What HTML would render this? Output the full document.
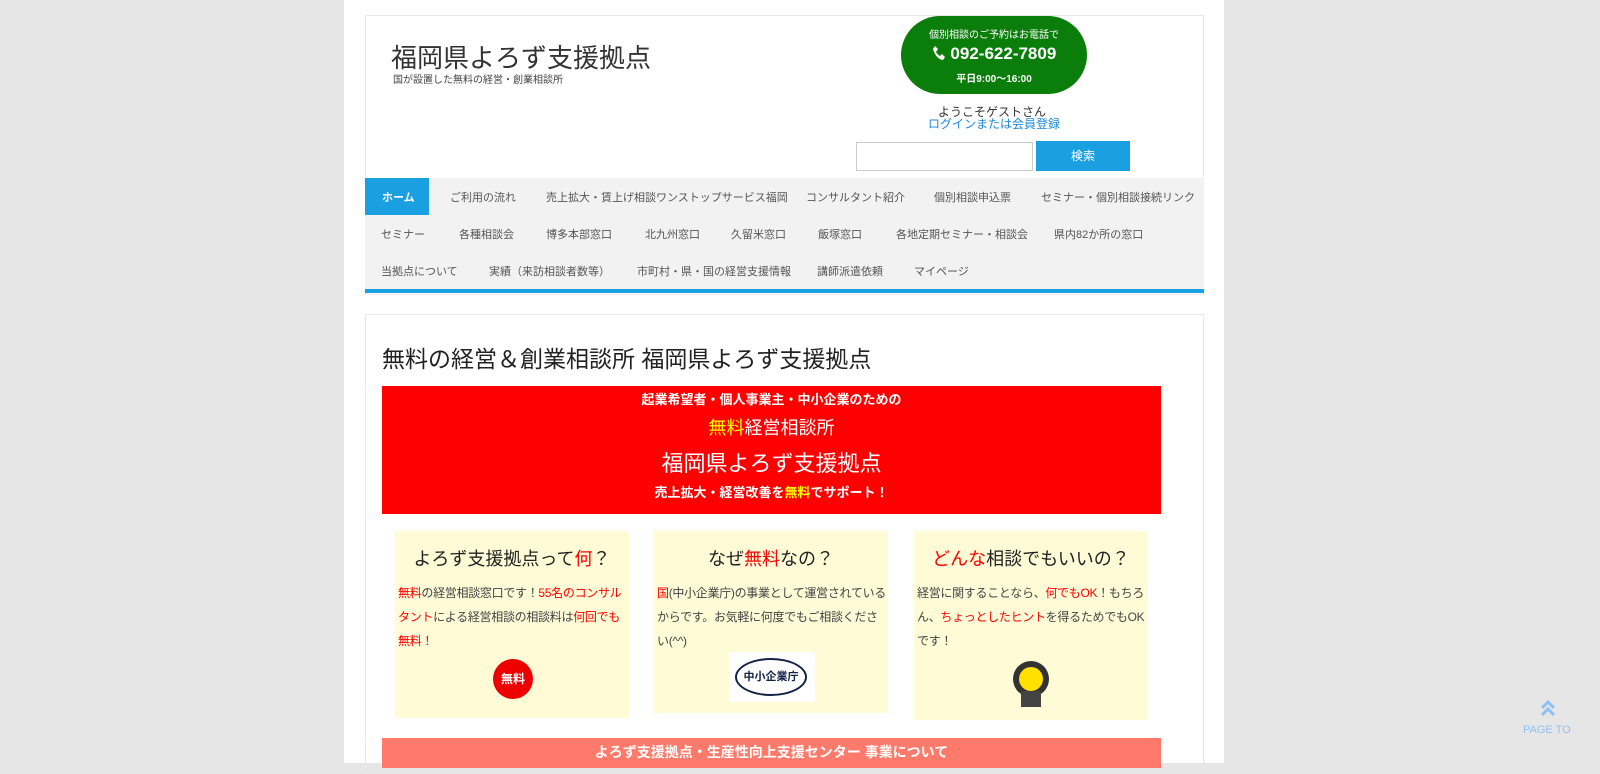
<!DOCTYPE html><html><head><meta charset="utf-8"><style>
*{margin:0;padding:0;box-sizing:border-box}
body{width:1600px;height:763px;overflow:hidden;background:#e6e6e6;font-family:"Liberation Sans","Noto Sans CJK JP",sans-serif;color:#333;position:relative}
.wrap{position:absolute;left:344px;top:0;width:880px;height:763px;background:#fff}
.hdr{position:absolute;left:21px;top:15px;width:839px;height:280px;border:1px solid #e8e8e8;background:#fff}
.abs{position:absolute}
.nav{position:absolute;left:21px;top:178px;width:839px;height:111px;background:#f2f2f2}
.nav span{position:absolute;font-size:11px;color:#555;white-space:nowrap}
.main{position:absolute;left:21px;top:314px;width:839px;height:460px;border:1px solid #e8e8e8}
.box{position:absolute;background:#fffbd6}
.box h3{font-weight:normal;font-size:18px;text-align:center;color:#222;margin-top:14px}
.box p{font-size:12px;line-height:24px;color:#444;margin:10px 2px 0 3px;letter-spacing:-0.3px}
.r{color:#f00}
</style></head><body>
<div class="wrap">
<div class="hdr"></div>
<div class="abs" style="left:47px;top:38px;font-size:26px;color:#333">福岡県よろず支援拠点</div>
<div class="abs" style="left:49px;top:71px;font-size:10px;color:#444">国が設置した無料の経営・創業相談所</div>
<div class="abs" style="left:557px;top:16px;width:186px;height:78px;border-radius:40px;background:#0a7d0a;color:#fff;text-align:center">
<div style="font-size:10px;margin-top:10px">個別相談のご予約はお電話で</div>
<div style="font-size:17px;font-weight:bold;margin-top:3px"><svg width="14" height="16" viewBox="0 0 14 16" style="vertical-align:-2px"><path d="M3 1 L6 4 L4 7 Q6 10 8 11 L10 9 L13 12 L11 15 Q4 14 1 4 Z" fill="#fff"/></svg> 092-622-7809</div>
<div style="font-size:10px;margin-top:6px;font-weight:bold">平日9:00〜16:00</div></div>
<div class="abs" style="left:594px;top:103px;font-size:12px;color:#333">ようこそゲストさん</div>
<div class="abs" style="left:584px;top:115px;font-size:12px;color:#1e88d9">ログインまたは会員登録</div>
<div class="abs" style="left:512px;top:142px;width:177px;height:29px;border:1px solid #ccc;background:#fff"></div>
<div class="abs" style="left:692px;top:141px;width:94px;height:30px;background:#1aa0e0;color:#fff;font-size:12px;text-align:center;line-height:30px">検索</div>
<div class="nav">
<div class="abs" style="left:0;top:0;width:64px;height:37px;background:#1a9fe0"></div>
<span style="left:17px;top:11px;color:#fff;font-weight:bold">ホーム</span>
<span style="left:85px;top:11px">ご利用の流れ</span>
<span style="left:181px;top:11px">売上拡大・賃上げ相談ワンストップサービス福岡</span>
<span style="left:441px;top:11px">コンサルタント紹介</span>
<span style="left:569px;top:11px">個別相談申込票</span>
<span style="left:676px;top:11px">セミナー・個別相談接続リンク</span>
<span style="left:16px;top:48px">セミナー</span>
<span style="left:94px;top:48px">各種相談会</span>
<span style="left:181px;top:48px">博多本部窓口</span>
<span style="left:280px;top:48px">北九州窓口</span>
<span style="left:366px;top:48px">久留米窓口</span>
<span style="left:453px;top:48px">飯塚窓口</span>
<span style="left:531px;top:48px">各地定期セミナー・相談会</span>
<span style="left:689px;top:48px">県内82か所の窓口</span>
<span style="left:16px;top:85px">当拠点について</span>
<span style="left:124px;top:85px">実績（来訪相談者数等）</span>
<span style="left:272px;top:85px">市町村・県・国の経営支援情報</span>
<span style="left:452px;top:85px">講師派遣依頼</span>
<span style="left:549px;top:85px">マイページ</span>
</div>
<div class="abs" style="left:21px;top:289px;width:839px;height:4px;background:#1a9fe0"></div>
<div class="main"></div>
<div class="abs" style="left:38px;top:340px;font-size:23px;color:#222">無料の経営＆創業相談所 福岡県よろず支援拠点</div>
<div class="abs" style="left:38px;top:386px;width:779px;height:128px;background:#f00;color:#fff;text-align:center;font-weight:bold">
<div style="font-size:13px;margin-top:3px">起業希望者・個人事業主・中小企業のための</div>
<div style="font-size:18px;font-weight:normal;margin-top:6px"><span style="color:#ff0">無料</span>経営相談所</div>
<div style="font-size:22px;font-weight:normal;margin-top:6px">福岡県よろず支援拠点</div>
<div style="font-size:13px;margin-top:4px">売上拡大・経営改善を<span style="color:#ff0">無料</span>でサポート！</div></div>
<div class="box" style="left:51px;top:531px;width:234px;height:187px"><h3>よろず支援拠点って<span class="r">何</span>？</h3>
<p><span class="r">無料</span>の経営相談窓口です！<span class="r">55名のコンサルタント</span>による経営相談の相談料は<span class="r">何回でも無料！</span></p>
<div class="abs" style="left:98px;top:128px;width:40px;height:40px;border-radius:50%;background:#e00;color:#fff;font-size:12px;font-weight:bold;text-align:center;line-height:40px">無料</div></div>
<div class="box" style="left:310px;top:531px;width:234px;height:182px"><h3>なぜ<span class="r">無料</span>なの？</h3>
<p><span class="r">国</span>(中小企業庁)の事業として運営されているからです。お気軽に何度でもご相談ください(^^)</p>
<div class="abs" style="left:75px;top:121px;width:86px;height:50px;background:#fff"><div style="margin:6px 6px;width:72px;height:38px;border:2px solid #124;border-radius:50%;font-size:11px;font-weight:bold;color:#124;text-align:center;line-height:34px">中小企業庁</div></div></div>
<div class="box" style="left:570px;top:531px;width:234px;height:189px"><h3><span class="r">どんな</span>相談でもいいの？</h3>
<p>経営に関することなら、<span class="r">何でもOK</span>！もちろん、<span class="r">ちょっとしたヒント</span>を得るためでもOKです！</p>
<div class="abs" style="left:99px;top:130px;width:36px;height:36px;border-radius:50%;background:#333"><div style="margin:6px;width:24px;height:24px;border-radius:50%;background:#ffe000"></div></div>
<div class="abs" style="left:107px;top:160px;width:20px;height:16px;background:#444"></div></div>
<div class="abs" style="left:38px;top:738px;width:779px;height:30px;background:#ff7a6a;color:#fff;text-align:center;font-size:14px;font-weight:bold;padding-top:4px">よろず支援拠点・生産性向上支援センター 事業について</div>
</div>
<svg class="abs" style="left:1540px;top:700px" width="16" height="18" viewBox="0 0 16 18"><path d="M2 8 L8 2 L14 8 M2 15 L8 9 L14 15" stroke="#8ec0f0" stroke-width="3" fill="none"/></svg>
<div class="abs" style="left:1523px;top:724px;color:#8ec0f0;font-size:11px">PAGE TO</div>
</body></html>
